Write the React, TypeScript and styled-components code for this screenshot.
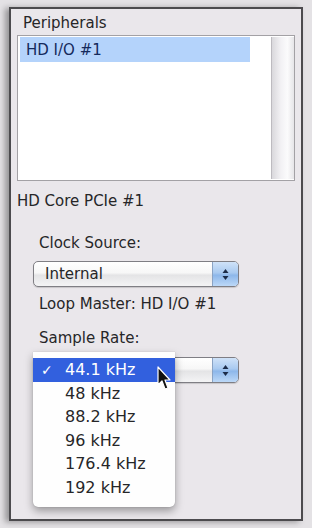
import React from 'react';
import styled, {createGlobalStyle} from 'styled-components';

const GlobalStyle = createGlobalStyle`
    html, body {
        margin: 0;
        padding: 0;
        background: #e4e2e5;
    }
    body {
        font-family: "DejaVu Sans", "Liberation Sans", sans-serif;
        color: #262628;
    }
`

const Page = styled.div`
    width: 312px;
    height: 528px;
    padding: 7px 0 0 9px;
    box-sizing: border-box;
    position: relative;
    overflow: hidden;
`

const Frame = styled.div`
    width: 294px;
    height: 514px;
    box-sizing: border-box;
    border: 2px solid #4c4b4e;
    background: #eae7eb;
    box-shadow: -4px 1px 6px rgba(0, 0, 0, 0.35);
    padding: 6px 6px 0 6px;
    display: flex;
    flex-direction: column;
`

const Label = styled.div<{indent?: number; top?: number}>`
    font-size: 15px;
    line-height: 17px;
    padding-left: ${props => props.indent || 0}px;
    margin-top: ${props => props.top || 0}px;
    white-space: nowrap;
`

const ListBox = styled.div`
    margin-top: 3px;
    height: 146px;
    box-sizing: border-box;
    border: 1px solid #a3a1a5;
    background: #fff;
    display: flex;
    padding: 1px 0 1px 2px;
`

const ListItems = styled.div`
    flex: 1;
`

const ListRow = styled.div<{selected?: boolean}>`
    width: 230px;
    height: 25px;
    box-sizing: border-box;
    padding: 4px 0 0 6px;
    font-size: 15px;
    line-height: 18px;
    color: #152a5c;
    background: ${props => props.selected ? '#b4d3fb' : 'transparent'};
`

const ScrollTrack = styled.div`
    width: 22px;
    border-left: 1px solid #bdbbc0;
    background: linear-gradient(to right, #d9d8dc 0%, #f2f1f4 40%, #fbfbfc 70%, #e6e5e8 100%);
`

const Controls = styled.div`
    display: flex;
    flex-direction: column;
    padding-left: 16px;
`

const Field = styled.div<{top: number}>`
    position: relative;
    margin-top: ${props => props.top}px;
`

const PopUp = styled.div`
    width: 206px;
    height: 26px;
    box-sizing: border-box;
    border: 1px solid #7f7e84;
    border-radius: 5px;
    display: flex;
    overflow: hidden;
    background: linear-gradient(to bottom, #ffffff 0%, #f7f7f7 45%, #e4e4e6 55%, #f4f4f5 100%);
    box-shadow: 0 1px 1px rgba(0, 0, 0, 0.15);
`

const PopUpText = styled.div`
    flex: 1;
    padding: 4px 0 0 11px;
    font-size: 15px;
    line-height: 17px;
`

const Stepper = styled.div`
    width: 25px;
    border-left: 1px solid #8aa3c4;
    background: linear-gradient(to bottom, #cfe2f8 0%, #a9caf0 45%, #8db7ea 55%, #bcd8f7 100%);
    display: flex;
    align-items: center;
    justify-content: center;
`

const Menu = styled.div`
    position: absolute;
    left: 0;
    top: -5px;
    width: 142px;
    height: 155px;
    background: #fefefe;
    border-radius: 0 0 5px 5px;
    box-shadow: 0 4px 9px rgba(0, 0, 0, 0.35), 0 0 1px rgba(0, 0, 0, 0.3);
    padding-top: 6px;
    box-sizing: border-box;
`

const MenuItem = styled.div<{selected?: boolean}>`
    height: 23.5px;
    display: flex;
    align-items: center;
    font-size: 16px;
    color: ${props => props.selected ? '#ffffff' : '#262628'};
    background: ${props => props.selected ? '#3260de' : 'transparent'};
`

const Check = styled.span`
    width: 32px;
    padding-left: 8px;
    box-sizing: border-box;
    font-size: 14px;
`

const Cursor = styled.svg`
    position: absolute;
    left: 157px;
    top: 366px;
`

const rates = ['44.1 kHz', '48 kHz', '88.2 kHz', '96 kHz', '176.4 kHz', '192 kHz']

const Arrows = () => (
    <svg width="9" height="13" viewBox="0 0 9 13">
        <path d="M4.5 1 L7.5 5 H1.5 Z" fill="#1c2c48"/>
        <path d="M4.5 12 L7.5 8 H1.5 Z" fill="#1c2c48"/>
    </svg>
)

export default function App() {
    return (
        <>
            <GlobalStyle/>
            <Page>
                <Frame>
                    <Label indent={6}>Peripherals</Label>
                    <ListBox>
                        <ListItems>
                            <ListRow selected>HD I/O #1</ListRow>
                        </ListItems>
                        <ScrollTrack/>
                    </ListBox>
                    <Label top={12}>HD Core PCIe #1</Label>
                    <Controls>
                        <Label indent={6} top={25}>Clock Source:</Label>
                        <Field top={9}>
                            <PopUp>
                                <PopUpText>Internal</PopUpText>
                                <Stepper><Arrows/></Stepper>
                            </PopUp>
                        </Field>
                        <Label indent={6} top={9}>Loop Master: HD I/O #1</Label>
                        <Label indent={6} top={17}>Sample Rate:</Label>
                        <Field top={10}>
                            <PopUp>
                                <PopUpText/>
                                <Stepper><Arrows/></Stepper>
                            </PopUp>
                            <Menu>
                                {rates.map((r, i) => (
                                    <MenuItem key={r} selected={i === 0}>
                                        <Check>{i === 0 ? '✓' : ''}</Check>
                                        {r}
                                    </MenuItem>
                                ))}
                            </Menu>
                        </Field>
                    </Controls>
                </Frame>
                <Cursor width="14" height="26" viewBox="0 0 14 26">
                    <path d="M1 1 L1 19 L5 15 L8 23 L11 22 L8 14 L13 14 Z" fill="#111" stroke="#fff" strokeWidth="1.2" strokeLinejoin="round"/>
                </Cursor>
            </Page>
        </>
    );
}
